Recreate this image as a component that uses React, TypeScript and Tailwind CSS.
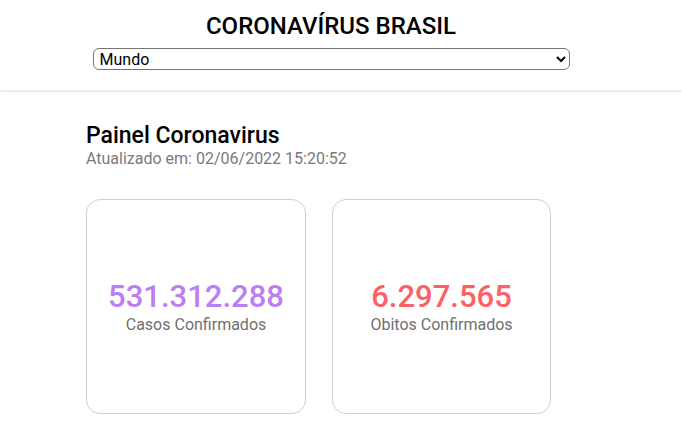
export default function App() {
  return (
    <div className="min-h-screen bg-white font-['Roboto',sans-serif]">
      <header className="h-[90px] shadow-[0_1px_3px_rgba(0,0,0,0.15)] pr-[20px] flex flex-col items-center">
        <h1 className="mt-[11px] text-[24px] leading-[30px] font-medium text-black">CORONAVÍRUS BRASIL</h1>
        <select className="mt-[7px] w-[477px] h-[22px] border border-[#767676] rounded-[6px] pl-[2px] text-[16px] text-black bg-white font-['Roboto',sans-serif]">
          <option>Mundo</option>
        </select>
      </header>
      <main className="pl-[86px] pt-[33px]">
        <h2 className="text-[23px] leading-[26px] font-medium text-black">Painel Coronavirus</h2>
        <p className="text-[16px] leading-[20px] text-[#7a7a7a]">Atualizado em: 02/06/2022 15:20:52</p>
        <div className="mt-[30px] flex gap-[26px]">
          <div className="w-[220px] h-[215px] border border-[#cfcfcf] rounded-[14px] flex flex-col items-center justify-center">
            <div className="text-[31px] leading-[36px] font-medium text-[#bb7ff0]">531.312.288</div>
            <div className="text-[16px] leading-[20px] text-[#6f6f6f]">Casos Confirmados</div>
          </div>
          <div className="w-[219px] h-[215px] border border-[#cfcfcf] rounded-[14px] flex flex-col items-center justify-center">
            <div className="text-[31px] leading-[36px] font-medium text-[#fd6166]">6.297.565</div>
            <div className="text-[16px] leading-[20px] text-[#6f6f6f]">Obitos Confirmados</div>
          </div>
        </div>
      </main>
    </div>
  );
}
